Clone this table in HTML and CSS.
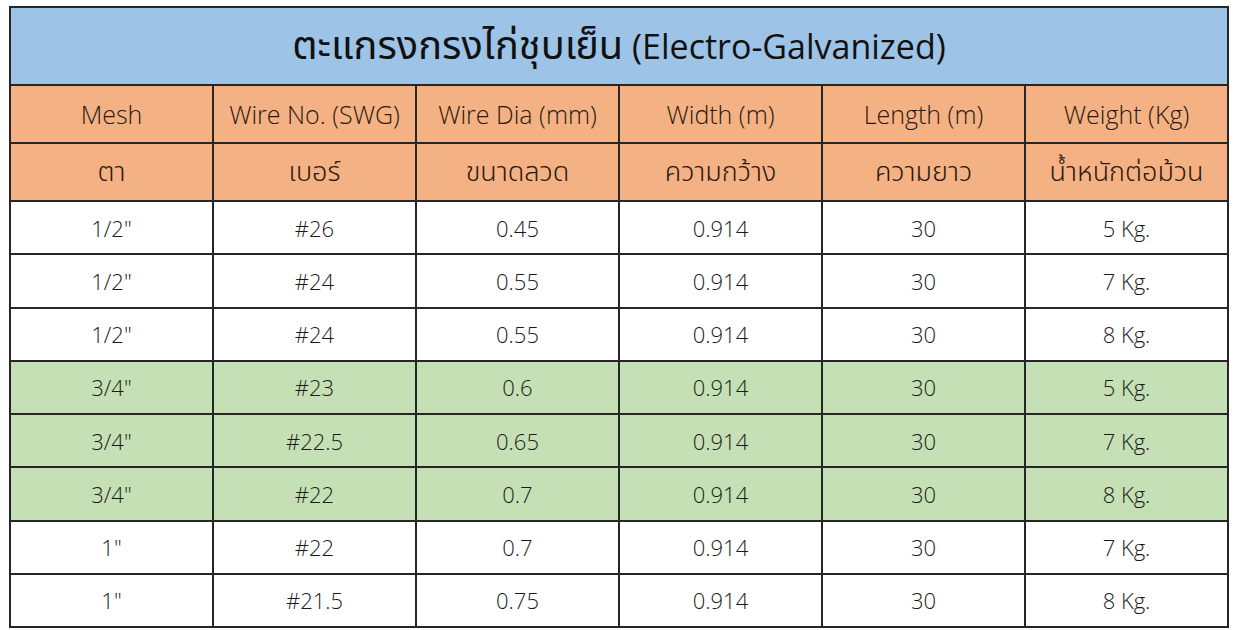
FILE: index.html
```html
<!DOCTYPE html>
<html lang="th">
<head>
<meta charset="utf-8">
<title>ตะแกรงกรงไก่ชุบเย็น</title>
<link rel="stylesheet" href="styles.css">
</head>
<body>
<div class="page">
  <div class="grid">
    <div class="cell title"><span class="th">ตะแกรงกรงไก่ชุบเย็น</span>&nbsp;(Electro-Galvanized)</div>

    <div class="cell head">Mesh</div>
    <div class="cell head">Wire No. (SWG)</div>
    <div class="cell head">Wire Dia (mm)</div>
    <div class="cell head">Width (m)</div>
    <div class="cell head">Length (m)</div>
    <div class="cell head">Weight (Kg)</div>

    <div class="cell head th">ตา</div>
    <div class="cell head th">เบอร์</div>
    <div class="cell head th">ขนาดลวด</div>
    <div class="cell head th">ความกว้าง</div>
    <div class="cell head th">ความยาว</div>
    <div class="cell head th">น้ำหนักต่อม้วน</div>

    <div class="cell">1/2"</div><div class="cell">#26</div><div class="cell">0.45</div><div class="cell">0.914</div><div class="cell">30</div><div class="cell">5 Kg.</div>
    <div class="cell">1/2"</div><div class="cell">#24</div><div class="cell">0.55</div><div class="cell">0.914</div><div class="cell">30</div><div class="cell">7 Kg.</div>
    <div class="cell">1/2"</div><div class="cell">#24</div><div class="cell">0.55</div><div class="cell">0.914</div><div class="cell">30</div><div class="cell">8 Kg.</div>

    <div class="cell green">3/4"</div><div class="cell green">#23</div><div class="cell green">0.6</div><div class="cell green">0.914</div><div class="cell green">30</div><div class="cell green">5 Kg.</div>
    <div class="cell green">3/4"</div><div class="cell green">#22.5</div><div class="cell green">0.65</div><div class="cell green">0.914</div><div class="cell green">30</div><div class="cell green">7 Kg.</div>
    <div class="cell green">3/4"</div><div class="cell green">#22</div><div class="cell green">0.7</div><div class="cell green">0.914</div><div class="cell green">30</div><div class="cell green">8 Kg.</div>

    <div class="cell">1"</div><div class="cell">#22</div><div class="cell">0.7</div><div class="cell">0.914</div><div class="cell">30</div><div class="cell">7 Kg.</div>
    <div class="cell">1"</div><div class="cell">#21.5</div><div class="cell">0.75</div><div class="cell">0.914</div><div class="cell">30</div><div class="cell">8 Kg.</div>
  </div>
</div>
</body>
</html>
```

FILE: styles.css
```css
html, body {
  margin: 0;
  padding: 0;
  background: #ffffff;
}

.page {
  padding: 6px 0 0 9px;
}

.grid {
  display: grid;
  width: 1220px;
  box-sizing: border-box;
  grid-template-columns: repeat(6, 1fr);
  grid-template-rows: 76px 56px 56px repeat(8, 51.25px);
  gap: 2px;
  padding: 2px;
  background: #262626;
  font-family: "Open Sans", "Noto Sans", "Noto Sans Thai", "Tahoma", sans-serif;
  color: #1e1e1e;
}

.cell {
  background: #ffffff;
  display: flex;
  align-items: center;
  justify-content: center;
  font-size: 22px;
  font-weight: 300;
  color: #1a1a1a;
  white-space: nowrap;
}

.title {
  grid-column: 1 / -1;
  background: #9dc3e6;
  font-size: 34px;
  font-weight: 500;
  color: #111;
}

.title .th {
  font-size: 1.17em;
  font-weight: 400;
}

.head {
  background: #f4b183;
  font-size: 25px;
  color: #2a1a12;
}

.head.th {
  font-size: 27px;
}

.green {
  background: #c5e0b4;
}
```
